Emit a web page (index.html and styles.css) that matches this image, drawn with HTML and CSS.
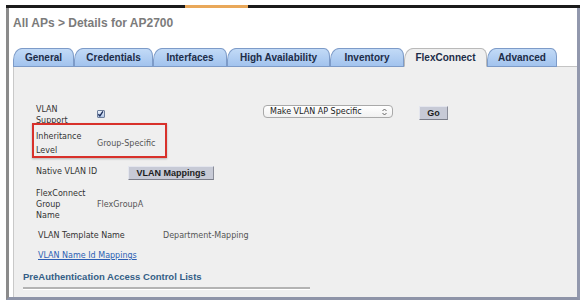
FILE: index.html
```html
<!DOCTYPE html>
<html>
  <head>
    <meta charset="utf-8" />
    <title>All APs &gt; Details for AP2700</title>
    <link rel="stylesheet" href="styles.css">
  </head>
  <body>
    <div class="frame">
      <div class="topbar"></div>
      <div class="frame-body">
        <h1 class="title">All APs &gt; Details for AP2700</h1>

        <ul class="tabs">
          <li class="tab tab-general">General</li>
          <li class="tab tab-credentials">Credentials</li>
          <li class="tab tab-interfaces">Interfaces</li>
          <li class="tab tab-ha">High Availability</li>
          <li class="tab tab-inventory">Inventory</li>
          <li class="tab tab-flex active">FlexConnect</li>
          <li class="tab tab-advanced">Advanced</li>
        </ul>

        <div class="panel">
          <div class="row row-support">
            <div class="label">VLAN<br>Support</div>
            <span class="check">
              <svg width="8" height="8" viewBox="0 0 8 8"><path d="M1.5 4.2 L3.3 6.2 L6.8 1" fill="none" stroke="#1d2f5c" stroke-width="1.6"/></svg>
            </span>
            <div class="select">
              <span>Make VLAN AP Specific</span>
              <svg width="5" height="8" viewBox="0 0 5 8"><path d="M0.5 3 L2.5 1 L4.5 3 M0.5 5 L2.5 7 L4.5 5" fill="none" stroke="#555" stroke-width="0.9"/></svg>
            </div>
            <button class="btn btn-go">Go</button>
          </div>

          <div class="row row-inherit">
            <div class="label">Inheritance<br>Level</div>
            <div class="value">Group-Specific</div>
          </div>

          <div class="row row-native">
            <div class="label label-wide">Native VLAN ID</div>
            <button class="btn btn-mappings">VLAN Mappings</button>
          </div>

          <div class="row row-group">
            <div class="label">FlexConnect<br>Group<br>Name</div>
            <div class="value">FlexGroupA</div>
          </div>

          <div class="row row-template">
            <div class="label label-template">VLAN Template Name</div>
            <div class="value">Department-Mapping</div>
          </div>

          <div class="row row-link">
            <a href="#" class="link">VLAN Name Id Mappings</a>
          </div>

          <h2 class="section">PreAuthentication Access Control Lists</h2>
          <div class="rule"></div>
        </div>
      </div>
    </div>
  </body>
</html>
```

FILE: styles.css
```css
body {
  margin: 0;
  background-color: #ffffff;
  font-family: "DejaVu Sans", Verdana, sans-serif;
  font-size: 8px;
  color: #333333;
}

.frame {
  width: 574px;
  margin: 5px 0 0 6px;
}

.topbar {
  height: 3px;
  background: linear-gradient(to right, #1b1b1b 179px, #e9a85a 179px, #e9a85a 242px, #1b1b1b 242px);
}

.frame-body {
  height: 289px;
  border-left: 3px solid #8b8b8b;
  border-right: 3px solid #9298ad;
  border-bottom: 3px solid #8e94a8;
  padding-left: 4px;
  display: flex;
  flex-direction: column;
}

.title {
  margin: 0;
  padding: 8px 0 0 0;
  height: 32px;
  font-family: "Liberation Sans", Arial, sans-serif;
  font-size: 12px;
  line-height: 14px;
  font-weight: bold;
  color: #7b7b7b;
}

/* tabs */

.tabs {
  list-style: none;
  margin: 0;
  padding: 0;
  display: flex;
  height: 18px;
  border-bottom: 1px solid #c4c4c4;
}

.tab {
  position: relative;
  box-sizing: border-box;
  height: 19px;
  margin-bottom: -1px;
  border: 1px solid #7d9bc8;
  border-radius: 9px 6px 0 0 / 12px 8px 0 0;
  background: linear-gradient(#c2daf6, #a2c3ee);
  font-family: "Liberation Sans", Arial, sans-serif;
  font-size: 10px;
  font-weight: bold;
  line-height: 17px;
  text-align: center;
  color: #1c2c48;
}

.tab.active {
  background: #efefef;
  border-color: #b9b9b9;
  border-bottom-color: #efefef;
}

.tab-general { width: 61px; }
.tab-credentials { width: 79px; }
.tab-interfaces { width: 74px; }
.tab-ha { width: 103px; }
.tab-inventory { width: 74px; }
.tab-flex { width: 83px; }
.tab-advanced { width: 70px; }

/* panel */

.panel {
  flex: 1;
  background-color: #efefef;
  border-left: 1px solid #c9c9c9;
  padding: 38px 0 0 22px;
}

.row {
  display: flex;
  align-items: center;
}

.label {
  width: 61px;
  line-height: 11px;
  color: #333333;
}

.value {
  color: #555555;
}

.row-support {
  align-items: flex-start;
  height: 25px;
}

.row-support .label {
  line-height: 10.5px;
}

.check {
  box-sizing: border-box;
  width: 8px;
  height: 8px;
  margin-top: 5px;
  border: 1px solid #6f7f9c;
  border-radius: 1px;
  background: linear-gradient(#eef3fb, #b3c8e8);
  display: flex;
}

.check svg {
  margin: -1px 0 0 -1px;
}

.select {
  box-sizing: border-box;
  width: 130px;
  height: 13px;
  margin-left: 158px;
  padding: 0 5px 0 6px;
  border: 1px solid #a9a9a9;
  border-radius: 4px;
  background: linear-gradient(#ffffff, #f1f1f1);
  display: flex;
  align-items: center;
  justify-content: space-between;
  line-height: 11px;
  color: #222222;
}

.btn {
  box-sizing: border-box;
  margin: 0;
  padding: 0;
  height: 14px;
  border: 1px solid;
  border-color: #e4e6ee #8a8d99 #7a7d88 #e4e6ee;
  background-color: #c7cad6;
  font-family: "Liberation Sans", Arial, sans-serif;
  font-size: 9px;
  font-weight: bold;
  color: #1d1d1d;
  line-height: 12px;
}

.btn-go {
  width: 29px;
  margin: 1px 0 0 26px;
}

.row-inherit {
  position: relative;
  margin-top: 0;
  height: 27px;
}

.row-inherit .label {
  line-height: 13.5px;
}

.row-inherit::after {
  content: "";
  position: absolute;
  left: -4px;
  top: -7px;
  width: 135px;
  height: 35px;
  box-sizing: border-box;
  border: 2px solid #d8312b;
  box-shadow: 0 1px 2px rgba(0, 0, 0, 0.25);
}

.row-native {
  margin-top: 7px;
  height: 15px;
}

.label-wide {
  width: 92px;
}

.btn-mappings {
  width: 86px;
  height: 14px;
  margin-top: 3px;
}

.row-group {
  margin-top: 9px;
}

.row-template {
  margin-top: 9px;
}

.label-template {
  width: 125px;
  margin-left: 2px;
}

.row-link {
  margin-top: 9px;
  margin-left: 2px;
  line-height: 11px;
}

.link {
  color: #2d5fb4;
  text-decoration: underline;
}

.section {
  margin: 10px 0 0 -13px;
  font-family: "Liberation Sans", Arial, sans-serif;
  font-size: 9.5px;
  line-height: 12px;
  font-weight: bold;
  color: #345e86;
}

.rule {
  width: 287px;
  height: 2px;
  margin: 4px 0 0 -13px;
  background-color: #b3b3b3;
  border-bottom: 1px solid #ffffff;
}
```
